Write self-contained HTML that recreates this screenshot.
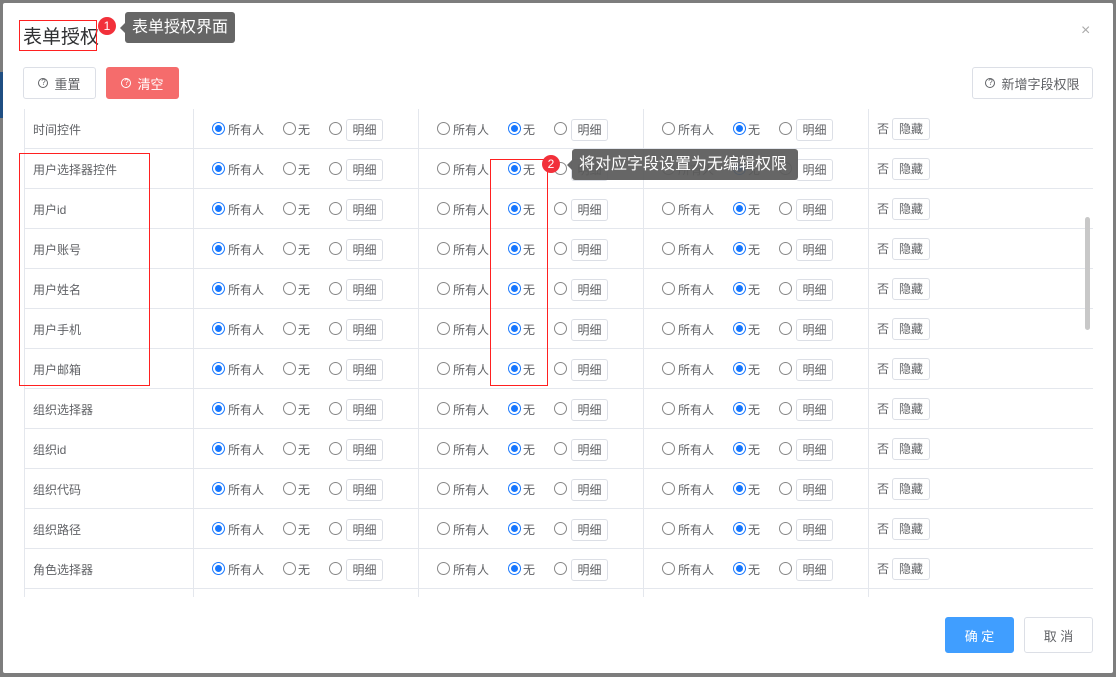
<!DOCTYPE html><html><head><meta charset="utf-8"><style>
*{box-sizing:border-box;margin:0;padding:0}
body{width:1116px;height:677px;background:#7d7d7d;position:relative;overflow:hidden;font-family:"Liberation Sans","Noto Sans CJK SC",sans-serif;font-size:12px;color:#606266}
.modal{position:absolute;left:3px;top:3px;width:1110px;height:670px;background:#fff;border-radius:2px}
.abs{position:absolute}
.btn{position:absolute;border:1px solid #dcdfe6;border-radius:3px;background:#fff;display:flex;align-items:center;justify-content:center;font-size:13px;color:#606266}
.q{display:inline-block;width:10px;height:10px;border:1px solid currentColor;border-radius:50%;font-size:8px;line-height:8px;text-align:center;margin-right:6px}
.tbl{position:absolute;left:24px;top:109px;width:1069px;height:488px;overflow:hidden;border-left:1px solid #e4e7ed}
.row{position:absolute;left:0;height:40px;width:1069px;border-bottom:1px solid #e4e7ed}
.c{position:absolute;top:0;height:40px;border-right:1px solid #e4e7ed}
.lbl{position:absolute;left:8px;top:12px;font-size:12px;color:#606266}
.r{position:absolute;top:13px;width:13px;height:13px;border:1px solid #888;border-radius:50%;background:#fff}
.r.on{border-color:#1677ff;background:#fff}
.r.on::after{content:"";position:absolute;left:2px;top:2px;width:7px;height:7px;border-radius:50%;background:#1677ff}
.t{position:absolute;top:12px;font-size:12px;color:#606266}
.sb{position:absolute;top:10px;height:22px;border:1px solid #dcdfe6;border-radius:3px;font-size:12px;line-height:20px;text-align:center;color:#606266;background:#fff}
.red{position:absolute;border:1px solid #ff2020}
.badge{position:absolute;width:18px;height:18px;border-radius:50%;background:#f2303a;color:#fff;font-size:12px;text-align:center;line-height:18px}
.tip{position:absolute;background:rgba(90,90,90,.93);color:#fff;font-size:16px;border-radius:3px;padding:0 7px;line-height:31px}
.tip::before{content:"";position:absolute;left:-5px;top:11px;border-right:5px solid rgba(90,90,90,.93);border-top:5px solid transparent;border-bottom:5px solid transparent}
</style></head><body>
<div class="abs" style="left:0;top:72px;width:3px;height:46px;background:#1f4e82"></div>
<div class="modal"></div>
<div class="abs" style="left:23px;top:22px;font-size:19px;color:#303133">表单授权</div>
<div class="abs" style="left:1081px;top:22px;font-size:16px;color:#aaa">×</div>
<div class="btn" style="left:23px;top:67px;width:73px;height:32px"><span class="q">?</span>重置</div>
<div class="btn" style="left:106px;top:67px;width:73px;height:32px;background:#f56c6c;border-color:#f56c6c;color:#fff"><span class="q">?</span>清空</div>
<div class="btn" style="left:972px;top:67px;width:121px;height:32px"><span class="q">?</span>新增字段权限</div>
<div class="tbl" id="tbl"></div>
<div class="abs" style="left:1085px;top:217px;width:5px;height:113px;background:#c8c8c8;border-radius:3px"></div>
<div class="btn" style="left:945px;top:617px;width:69px;height:36px;background:#409eff;border-color:#409eff;color:#fff">确 定</div>
<div class="btn" style="left:1024px;top:617px;width:69px;height:36px">取 消</div>
<div class="red" style="left:19px;top:20px;width:78px;height:31px"></div>
<div class="badge" style="left:98px;top:17px">1</div>
<div class="tip" style="left:125px;top:12px">表单授权界面</div>
<div class="red" style="left:19px;top:153px;width:131px;height:233px"></div>
<div class="red" style="left:490px;top:159px;width:58px;height:227px"></div>
<div class="badge" style="left:542px;top:155px">2</div>
<div class="tip" style="left:572px;top:149px;width:226px">将对应字段设置为无编辑权限</div>
<script>
const names=["时间控件","用户选择器控件","用户id","用户账号","用户姓名","用户手机","用户邮箱","组织选择器","组织id","组织代码","组织路径","角色选择器",""];
const cols=[0,169,394,619,844];let h="";
names.forEach((n,i)=>{const y=i*40;h+=`<div class="row" style="top:${y}px">`;
h+=`<div class="c" style="left:0;width:169px"><span class="lbl">${n}</span></div>`;
for(let k=1;k<=3;k++){const x=cols[k];const a=k==1;
h+=`<div class="c" style="left:${x}px;width:225px">`;
if(n){h+=`<span class="r ${a?'on':''}" style="left:18px"></span><span class="t" style="left:34px">所有人</span>`;
h+=`<span class="r ${a?'':'on'}" style="left:89px"></span><span class="t" style="left:104px">无</span>`;
h+=`<span class="r" style="left:135px"></span><span class="sb" style="left:152px;width:37px">明细</span>`;}
h+='</div>';}
h+=`<div class="c" style="left:844px;width:225px">`;
if(n)h+=`<span class="t" style="left:8px;top:11px">否</span><span class="sb" style="left:23px;width:38px;top:9px">隐藏</span>`;
h+='</div></div>';});
document.getElementById('tbl').innerHTML=h;
</script>
</body></html>
